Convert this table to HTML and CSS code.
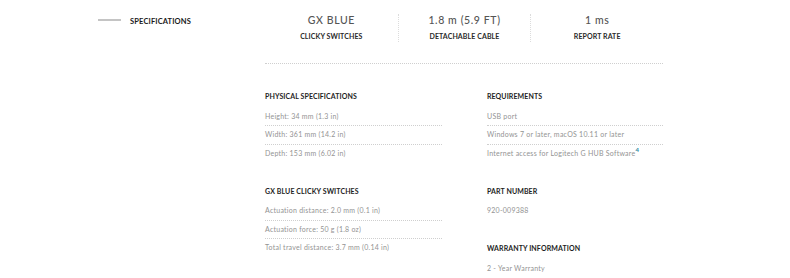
FILE: index.html
```html
<!DOCTYPE html>
<html>
<head>
<meta charset="utf-8">
<link rel="stylesheet" href="styles.css">
</head>
<body>
<div class="page">
  <aside class="side">
    <span class="side-line"></span>
    <span class="side-title">SPECIFICATIONS</span>
  </aside>
  <main class="main">
    <section class="stats">
      <div class="stat">
        <div class="stat-value">GX BLUE</div>
        <div class="stat-label">CLICKY SWITCHES</div>
      </div>
      <div class="stat">
        <div class="stat-value">1.8 m (5.9 FT)</div>
        <div class="stat-label">DETACHABLE CABLE</div>
      </div>
      <div class="stat">
        <div class="stat-value">1 ms</div>
        <div class="stat-label">REPORT RATE</div>
      </div>
    </section>
    <section class="specs">
      <div class="col">
        <div class="group">
          <h3 class="group-title">PHYSICAL SPECIFICATIONS</h3>
          <div class="row">Height: 34 mm (1.3 in)</div>
          <div class="row">Width: 361 mm (14.2 in)</div>
          <div class="row">Depth: 153 mm (6.02 in)</div>
        </div>
        <div class="group">
          <h3 class="group-title">GX BLUE CLICKY SWITCHES</h3>
          <div class="row">Actuation distance: 2.0 mm (0.1 in)</div>
          <div class="row">Actuation force: 50 g (1.8 oz)</div>
          <div class="row">Total travel distance: 3.7 mm (0.14 in)</div>
        </div>
      </div>
      <div class="col">
        <div class="group">
          <h3 class="group-title">REQUIREMENTS</h3>
          <div class="row">USB port</div>
          <div class="row">Windows 7 or later, macOS 10.11 or later</div>
          <div class="row">Internet access for Logitech G HUB Software<sup class="note">4</sup></div>
        </div>
        <div class="group">
          <h3 class="group-title">PART NUMBER</h3>
          <div class="row">920-009388</div>
        </div>
        <div class="group">
          <h3 class="group-title">WARRANTY INFORMATION</h3>
          <div class="row">2 - Year Warranty</div>
        </div>
      </div>
    </section>
  </main>
</div>
</body>
</html>
```
FILE: styles.css
```css
html, body {
  margin: 0;
  padding: 0;
  background: #ffffff;
}
body {
  font-family: Lato, "Open Sans", Arial, sans-serif;
  color: #222;
}
.page {
  display: flex;
  width: 790px;
  height: 278px;
  overflow: hidden;
}
.side {
  width: 167px;
  padding-left: 98px;
  padding-top: 16px;
  display: flex;
  align-items: flex-start;
  gap: 9px;
  box-sizing: content-box;
}
.side-line {
  display: block;
  width: 23px;
  height: 2px;
  background: #c4c4c4;
  margin-top: 3px;
}
.side-title {
  font-size: 7.5px;
  font-weight: 700;
  line-height: 10px;
  margin-top: 1px;
  color: #1a1a1a;
  letter-spacing: 0.15px;
}
.main {
  width: 398px;
}
.stats {
  display: grid;
  grid-template-columns: repeat(3, 1fr);
  padding-top: 14px;
  padding-bottom: 21px;
  border-bottom: 1px dotted #cfcfcf;
}
.stat {
  text-align: center;
  height: 28px;
}
.stat + .stat {
  border-left: 1px dotted #dcdcdc;
}
.stat-value {
  font-size: 10.5px;
  line-height: 12px;
  color: #555;
  letter-spacing: 0.6px;
  font-weight: 500;
}
.stat-label {
  margin-top: 5px;
  font-size: 7px;
  line-height: 10px;
  font-weight: 700;
  color: #2a2a2a;
  letter-spacing: 0.1px;
}
.specs {
  display: grid;
  grid-template-columns: 177px 176px;
  column-gap: 45px;
  padding-top: 27px;
}
.group {
  margin-bottom: 23.5px;
}
.group-title {
  margin: 0 0 6.5px 0;
  font-size: 7px;
  line-height: 10px;
  font-weight: 700;
  color: #1e1e1e;
  letter-spacing: 0.1px;
}
.row {
  font-size: 7px;
  line-height: 17.5px;
  color: #939393;
  letter-spacing: 0.25px;
  border-bottom: 1px dotted #cfcfcf;
}
.row:last-child {
  border-bottom: none;
}
.note {
  font-size: 6px;
  line-height: 0;
  color: #2a8aa3;
  font-weight: 700;
  vertical-align: 4px;
}
```
